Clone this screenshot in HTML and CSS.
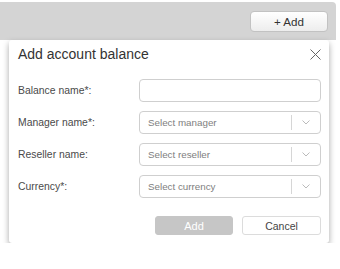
FILE: index.html
```html
<!DOCTYPE html>
<html>
<head>
<meta charset="utf-8">
<link rel="stylesheet" href="styles.css">
</head>
<body>
<div class="topbar">
  <button class="btn-top">+ Add</button>
</div>
<div class="modal">
  <div class="modal-head">
    <div class="title">Add account balance</div>
    <svg class="close" width="11" height="11" viewBox="0 0 11 11"><path d="M0.5 0.5 L10.5 10.5 M10.5 0.5 L0.5 10.5" stroke="#666" stroke-width="1" fill="none"/></svg>
  </div>
  <div class="form">
    <div class="label">Balance name*:</div>
    <div class="input"></div>
    <div class="label">Manager name*:</div>
    <div class="input select"><span class="ph">Select manager</span><span class="sep"></span><span class="arrow"><svg width="8" height="5" viewBox="0 0 8 5"><path d="M0.5 0.5 L4 4 L7.5 0.5" stroke="#bbb" fill="none"/></svg></span></div>
    <div class="label">Reseller name:</div>
    <div class="input select"><span class="ph">Select reseller</span><span class="sep"></span><span class="arrow"><svg width="8" height="5" viewBox="0 0 8 5"><path d="M0.5 0.5 L4 4 L7.5 0.5" stroke="#bbb" fill="none"/></svg></span></div>
    <div class="label">Currency*:</div>
    <div class="input select"><span class="ph">Select currency</span><span class="sep"></span><span class="arrow"><svg width="8" height="5" viewBox="0 0 8 5"><path d="M0.5 0.5 L4 4 L7.5 0.5" stroke="#bbb" fill="none"/></svg></span></div>
  </div>
  <div class="actions">
    <button class="btn btn-add">Add</button>
    <button class="btn btn-cancel">Cancel</button>
  </div>
</div>
</body>
</html>
```
FILE: styles.css
```css
html, body { margin: 0; padding: 0; background: #fff; }
body { font-family: "Liberation Sans", Arial, sans-serif; color: #333; }
.topbar {
  margin-top: 2px;
  width: 336px;
  height: 38px;
  background: #d4d4d4;
  border-top-right-radius: 4px;
  display: flex;
  justify-content: flex-end;
  align-items: center;
  box-sizing: border-box;
  padding-right: 8px;
}
.btn-top {
  width: 78px;
  height: 21px;
  border: 1px solid #c2c2c2;
  border-radius: 4px;
  background: linear-gradient(#ffffff, #ededed);
  font-family: inherit;
  font-size: 11.6px;
  color: #333;
  padding: 0;
}
.modal {
  margin-left: 9px;
  width: 320px;
  box-sizing: border-box;
  padding: 6px 8px 8px 9px;
  background: #fff;
  border-radius: 3px;
  box-shadow: 0 3px 6px rgba(0,0,0,0.35);
}
.modal-head {
  display: flex;
  justify-content: space-between;
  align-items: center;
  height: 16px;
}
.title { font-size: 14px; line-height: 16px; color: #333; }
.close { display: block; }
.form {
  margin-top: 17px;
  display: grid;
  grid-template-columns: 121px 182px;
  grid-auto-rows: 23px;
  row-gap: 9px;
  align-items: center;
}
.label { font-size: 10.4px; color: #4a4a4a; }
.input {
  height: 23px;
  box-sizing: border-box;
  border: 1px solid #cfcfcf;
  border-radius: 4px;
  background: #fff;
}
.select { display: flex; align-items: center; padding-left: 8px; }
.ph { flex: 1; font-size: 9.8px; color: #808080; }
.sep { width: 1px; height: 15px; background: #d6d6d6; }
.arrow { width: 28px; display: flex; justify-content: center; align-items: center; }
.arrow svg { display: block; }
.actions {
  margin-top: 18px;
  display: flex;
  justify-content: flex-end;
  gap: 9px;
}
.btn {
  height: 19px;
  padding: 0;
  font-family: inherit;
  border-radius: 3px;
  box-sizing: border-box;
}
.btn-add {
  width: 78px;
  background: #c6c6c6;
  border: 1px solid #c6c6c6;
  color: #fff;
  font-size: 11px;
}
.btn-cancel {
  width: 79px;
  background: #fff;
  border: 1px solid #dcdcdc;
  color: #444;
  font-size: 10.5px;
}
```
